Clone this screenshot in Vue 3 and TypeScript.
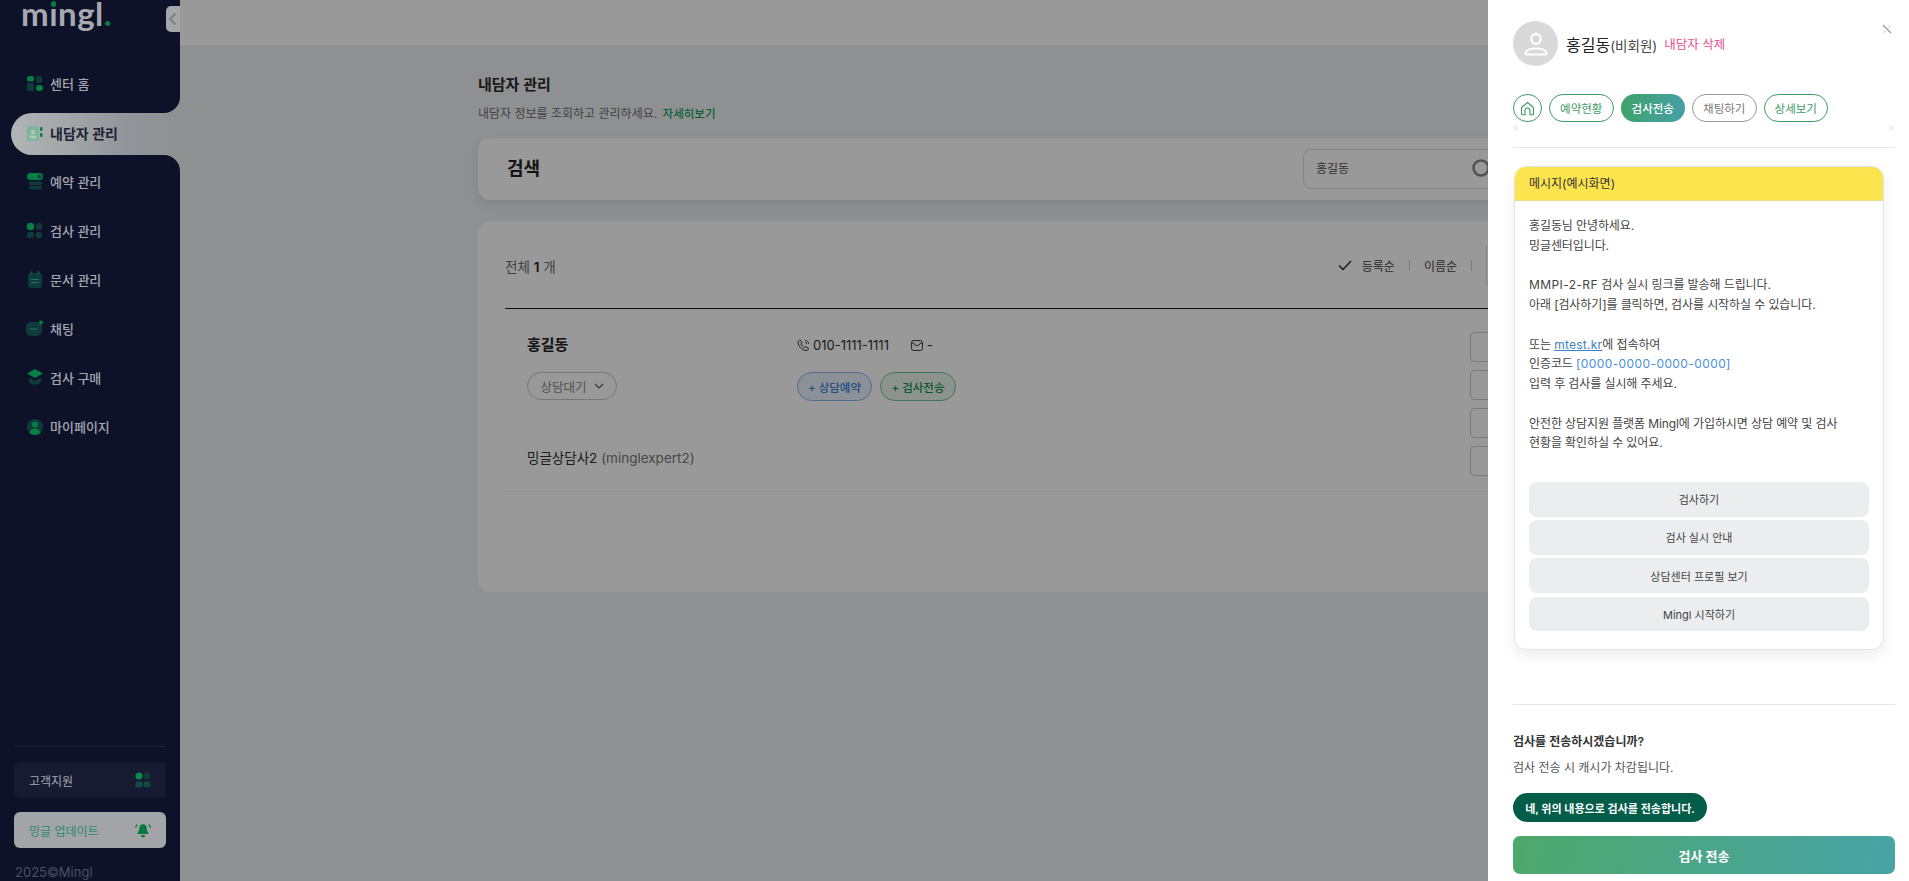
<template>
  <div class="page">
    <!-- Sidebar -->
    <aside class="sidebar">
      <div class="nav-top">
        <div class="logo">m<span class="logo__i">ı<i class="logo__dot" /></span>ngl<span class="logo__end">.</span></div>
        <button class="collapse" aria-label="collapse">
          <svg width="9" height="14" viewBox="0 0 9 14"><path d="M7.5 1.5 2 7l5.5 5.5" fill="none" stroke="#7d7f80" stroke-width="2" /></svg>
        </button>
        <a v-for="item in navBefore" :key="item.label" class="nav-item">
          <NavIcon :name="item.icon" />
          <span class="nav-text">{{ item.label }}</span>
        </a>
      </div>
      <div class="nav-active-row">
        <a class="nav-active">
          <NavIcon name="client" />
          <span class="nav-active__text">내담자 관리</span>
        </a>
      </div>
      <div class="nav-bottom">
        <a v-for="item in navAfter" :key="item.label" class="nav-item">
          <NavIcon :name="item.icon" />
          <span class="nav-text">{{ item.label }}</span>
        </a>
        <div class="side-foot">
          <div class="support">
            고객지원
            <svg width="16" height="16" viewBox="0 0 16 16">
              <circle cx="4" cy="4" r="3.5" fill="#0a8a48" />
              <circle cx="12" cy="4" r="3.5" fill="#123a38" />
              <rect x="0.5" y="9.5" width="7" height="6" rx="2" fill="#124a3f" />
              <rect x="8.5" y="9.5" width="7" height="6" rx="2" fill="#124a3f" />
            </svg>
          </div>
          <div class="update">
            밍글 업데이트
            <svg width="16" height="16" viewBox="0 0 16 16">
              <path d="M8 2.2c-2.6 0-3.8 2-3.8 4.400 0 2.200-.9 3.500-1.700 4.400v1h11v-1c-.8-.9-1.700-2.200-1.700-4.400 0-2.400-1.200-4.400-3.800-4.400Z" fill="#067a3e" />
              <rect x="6" y="13" width="4" height="2.200" rx="1" fill="#067a3e" />
              <path d="M2.300 2.500C1.200 3.600.7 4.700.6 6M13.700 2.500c1.100 1.100 1.600 2.200 1.700 3.500" fill="none" stroke="#067a3e" stroke-width="1.100" />
            </svg>
          </div>
          <div class="copyright">2025©Mingl</div>
        </div>
      </div>
    </aside>

    <!-- Main -->
    <main class="main">
      <div class="topbar" />
      <div class="content">
        <h1 class="title">내담자 관리</h1>
        <p class="subtitle">내담자 정보를 조회하고 관리하세요. <a class="more">자세히보기</a></p>

        <section class="search-card">
          <h2>검색</h2>
          <div class="search-input">
            <span>홍길동</span>
            <svg width="22" height="22" viewBox="0 0 22 22"><circle cx="10" cy="10" r="7.500" fill="none" stroke="#888" stroke-width="2.500" /></svg>
          </div>
        </section>

        <section class="list-card">
          <div class="list-head">
            <div class="total">전체 <b>1</b> 개</div>
            <div class="sort">
              <svg width="14" height="11" viewBox="0 0 14 11"><path d="m1 5.500 4 4L13 1" fill="none" stroke="#222" stroke-width="1.300" /></svg>
              <span>등록순</span>
              <i class="sort__sep" />
              <span>이름순</span>
              <i class="sort__sep" />
              <i class="sort__bar" />
            </div>
          </div>

          <div class="client-row">
            <div class="client-main">
              <div class="client-grid">
                <div class="client-name">홍길동</div>
                <div class="contact">
                  <svg width="13" height="13" viewBox="0 0 13 13"><path d="M3.300 1 5 3.700 4 5c.6 1.500 2 3 3.600 3.700l1.200-1.100 2.700 1.700c-.3 1.400-1.200 2.300-2.300 2.200C4.800 11.200 1.400 7.600 1 3.400.9 2.300 2 1.300 3.300 1Z" fill="none" stroke="#333" stroke-width="1" /><path d="M8 1.200c2 .2 3.500 1.700 3.700 3.700M8 3.200c1 .1 1.600.8 1.700 1.700" fill="none" stroke="#333" stroke-width=".9" /></svg>
                  <span class="contact__text">010-1111-1111</span>
                  <svg class="contact__mail" width="12" height="11" viewBox="0 0 12 11"><rect x=".6" y=".6" width="10.800" height="9.800" rx="1.800" fill="none" stroke="#333" /><path d="m1 2.500 5 3.500 5-3.500" fill="none" stroke="#333" /></svg>
                  <span>-</span>
                </div>
                <button class="status">
                  상담대기
                  <svg width="10" height="7" viewBox="0 0 10 7"><path d="m1 1 4 4 4-4" fill="none" stroke="#555" stroke-width="1.100" /></svg>
                </button>
                <div class="chips">
                  <span class="chip chip--blue">+ 상담예약</span>
                  <span class="chip chip--green">+ 검사전송</span>
                </div>
              </div>
              <div class="expert">밍글상담사2 <span>(minglexpert2)</span></div>
            </div>
            <div class="row-boxes">
              <span v-for="n in 4" :key="n" class="row-box" />
            </div>
          </div>
        </section>
      </div>
    </main>
    <div class="scrim" />

    <!-- Drawer -->
    <aside class="drawer">
      <button class="close" aria-label="close">
        <svg width="10" height="10" viewBox="0 0 10 10"><path d="m1 1 8 8" fill="none" stroke="#999" stroke-width="1.200" /><path d="M9 1 1 9" fill="none" stroke="#ccc" stroke-width="1" /></svg>
      </button>
      <header class="drawer-head">
        <div class="avatar">
          <svg width="28" height="28" viewBox="0 0 28 28">
            <circle cx="14" cy="9" r="4.800" fill="none" stroke="#fff" stroke-width="2.200" />
            <path d="M5 24.500h18c1.500 0 2-1 1.500-2-1-2.500-5-4-10.500-4s-9.500 1.500-10.500 4c-.5 1 0 2 1.500 2Z" fill="none" stroke="#fff" stroke-width="2.200" />
          </svg>
        </div>
        <div class="drawer-name">홍길동<small>(비회원)</small></div>
        <a class="delete">내담자 삭제</a>
      </header>

      <nav class="tabs">
        <span class="tab tab--home">
          <svg width="15" height="15" viewBox="0 0 15 15"><path d="M1.500 6.500 7.500 1.500l6 5v6a1.300 1.300 0 0 1-1.300 1.300h-2.200V9.500a2.500 2.500 0 0 0-5 0v4.300H2.800a1.300 1.300 0 0 1-1.300-1.300Z" fill="none" stroke="#3f9b66" stroke-width="1.100" /></svg>
        </span>
        <span
          v-for="tab in tabs"
          :key="tab.label"
          class="tab"
          :class="{ 'tab--active': tab.active, 'tab--muted': tab.muted }"
        >{{ tab.label }}</span>
      </nav>
      <div class="tab-arrows">
        <i class="arrow arrow--left" />
        <i class="arrow arrow--right" />
      </div>

      <section class="message">
        <div class="message__head">메시지(예시화면)</div>
        <div class="message__body">
          <p>홍길동님 안녕하세요.<br>밍글센터입니다.</p>
          <p><span class="latin">MMPI-2-RF</span> 검사 실시 링크를 발송해 드립니다.<br>아래 [검사하기]를 클릭하면, 검사를 시작하실 수 있습니다.</p>
          <p>또는 <a class="link">mtest.kr</a>에 접속하여<br>인증코드 <span class="code">[0000-0000-0000-0000]</span><br>입력 후 검사를 실시해 주세요.</p>
          <p>안전한 상담지원 플랫폼 Mingl에 가입하시면 상담 예약 및 검사<br>현황을 확인하실 수 있어요.</p>
          <div class="message__actions">
            <button v-for="label in messageActions" :key="label" class="action">{{ label }}</button>
          </div>
        </div>
      </section>

      <div class="drawer-foot">
        <div class="ask">검사를 전송하시겠습니까?</div>
        <div class="note">검사 전송 시 캐시가 차감됩니다.</div>
        <button class="confirm">네, 위의 내용으로 검사를 전송합니다.</button>
        <button class="submit">검사 전송</button>
      </div>
    </aside>
  </div>
</template>

<script setup lang="ts">
import { defineComponent, h } from 'vue'

const navBefore = [{ label: '센터 홈', icon: 'home' }]
const navAfter = [
  { label: '예약 관리', icon: 'book' },
  { label: '검사 관리', icon: 'test' },
  { label: '문서 관리', icon: 'doc' },
  { label: '채팅', icon: 'chat' },
  { label: '검사 구매', icon: 'buy' },
  { label: '마이페이지', icon: 'my' },
]

const tabs = [
  { label: '예약현황' },
  { label: '검사전송', active: true },
  { label: '채팅하기', muted: true },
  { label: '상세보기' },
]

const messageActions = ['검사하기', '검사 실시 안내', '상담센터 프로필 보기', 'Mingl 시작하기']

const on = '#067f42'
const dim = '#0f3b3b'

type Shape = [string, Record<string, string | number>]

const r = (x: number, y: number, width: number, height: number, rx: number, fill: string): Shape =>
  ['rect', { x, y, width, height, rx, fill }]
const c = (cx: number, cy: number, rad: number, fill: string): Shape =>
  ['circle', { cx, cy, r: rad, fill }]

const icons: Record<string, Shape[]> = {
  home: [r(1, 1, 7, 5.500, 2, on), r(10, 1, 6, 7, 2, dim), r(1, 8, 7, 8, 2, dim), r(10, 10, 7, 6, 3, on)],
  client: [
    r(1, 1, 12, 15, 2.500, '#7fb59b'),
    c(7, 7, 2.200, '#a9cdb9'),
    r(3.500, 10.500, 7, 3, 1.500, '#a9cdb9'),
    r(14, 2, 2.500, 4, 1, on),
    r(14, 8, 2.500, 4, 1, on),
  ],
  book: [r(1, 0, 16, 7, 3.500, on), c(13.500, 3.500, 1.800, dim), r(3, 8.500, 13, 3.500, 1.500, dim), r(3, 13, 13, 3.500, 1.500, dim)],
  test: [c(4.500, 4.500, 3.800, on), r(10, 1, 6, 7, 2.500, dim), r(1, 10, 7, 6, 1.500, dim), r(10, 10, 6, 6, 1.500, dim)],
  doc: [r(2, 2, 14, 15, 3, dim), r(4.500, 0, 2, 4, 1, '#14524a'), r(11.500, 0, 2, 4, 1, '#14524a'), r(5, 8, 8, 1, .5, '#1f7a5f'), r(5, 11, 8, 1, .5, '#1f7a5f')],
  chat: [r(0, 2, 16, 14, 5, dim), r(3.500, 8.500, 8, 1, .5, '#1f7a5f'), c(15, 2.500, 2, on)],
  buy: [
    ['path', { d: 'M9 0 17 4.500 9 9 1 4.500Z', fill: on }],
    ['path', { d: 'M3 8.500 9 11.800 15 8.500v4.500c-1.300 1.800-3.300 2.700-6 2.700s-4.700-.9-6-2.700Z', fill: dim }],
  ],
  my: [c(9, 9, 8, dim), c(9, 6.500, 3, on), ['path', { d: 'M3.500 15c.5-3 2.600-4.500 5.500-4.500s5 1.500 5.500 4.500c-1.500 1.300-3.400 2-5.500 2s-4-.7-5.500-2Z', fill: on }]],
}

const NavIcon = defineComponent({
  props: { name: { type: String, required: true } },
  setup(props) {
    return () =>
      h(
        'svg',
        { width: 18, height: 18, viewBox: '0 0 18 18', class: 'nav-icon' },
        icons[props.name].map(([tag, attrs]) => h(tag, attrs)),
      )
  },
})
</script>

<style>
html, body {
  margin: 0;
  background: #eef0f2;
}
</style>

<style scoped>
.page {
  position: relative;
  display: flex;
  height: 881px;
  overflow: hidden;
  font-family: Inter, "Noto Sans CJK KR", sans-serif;
  color: #2b2b2b;
  background: #eef0f2;
}

button {
  font-family: inherit;
  border: 0;
  cursor: pointer;
}

p, h1, h2 {
  margin: 0;
}

/* Sidebar */
.sidebar {
  position: relative;
  z-index: 2;
  width: 180px;
  flex-shrink: 0;
  display: flex;
  flex-direction: column;
  background: #8f9091;
  font-size: 13px;
  font-weight: 500;
  color: #a4a6b0;
}

.nav-top {
  position: relative;
  height: 113px;
  box-sizing: border-box;
  background: #0d1229;
  border-bottom-right-radius: 16px;
  padding-bottom: 4.500px;
  display: flex;
  flex-direction: column;
  justify-content: flex-end;
}

.logo {
  position: absolute;
  left: 21px;
  top: 0;
  font-family: Lato, sans-serif;
  font-size: 33px;
  font-weight: 700;
  line-height: 26px;
  letter-spacing: .5px;
  color: #a8a9b0;
}

.logo__i {
  position: relative;
}

.logo__dot {
  position: absolute;
  left: 1.500px;
  top: 8px;
  width: 5.500px;
  height: 5.500px;
  border-radius: 50%;
  background: #067f42;
}

.logo__end {
  color: #067f42;
}

.collapse {
  position: absolute;
  right: 0;
  top: 6px;
  width: 14px;
  height: 26px;
  padding: 0 0 0 2px;
  border-radius: 5px 0 0 5px;
  background: #a5a6a6;
  display: flex;
  align-items: center;
}

.nav-item {
  height: 49px;
  padding-left: 26px;
  display: flex;
  align-items: center;
  gap: 6px;
}

.nav-text {
  margin-top: -2px;
}

.nav-icon {
  flex-shrink: 0;
}

.nav-active-row {
  height: 42px;
  background: #0d1229;
  padding-left: 11px;
}

.nav-active {
  height: 100%;
  display: flex;
  align-items: center;
  gap: 6px;
  padding-left: 15px;
  border-radius: 21px 0 0 21px;
  background: linear-gradient(90deg, #b2b5b5, #93949a 70%, #8f9091);
  color: #1c2232;
  font-size: 14px;
  font-weight: 600;
}

.nav-active__text {
  margin-top: -3px;
}

.nav-bottom {
  flex: 1;
  background: #0d1229;
  border-top-right-radius: 16px;
  padding-top: 2.500px;
  display: flex;
  flex-direction: column;
}

.side-foot {
  margin: auto 14px 0 14px;
  border-top: 1px solid #1a1f38;
  padding-top: 15px;
  font-size: 12px;
  font-weight: 400;
}

.support,
.update {
  height: 36px;
  box-sizing: border-box;
  padding: 0 15px;
  border-radius: 6px;
  display: flex;
  align-items: center;
  justify-content: space-between;
}

.support {
  background: #161b32;
}

.update {
  margin-top: 14px;
  background: #a2a4a8;
  color: #2b8a6c;
}

.copyright {
  margin-top: 14px;
  height: 19px;
  line-height: 20px;
  font-size: 13px;
  color: #4a4f66;
  padding-left: 1px;
}

/* Main */
.main {
  flex: 1;
  min-width: 0;
  display: flex;
  flex-direction: column;
}

.scrim {
  position: absolute;
  inset: 0;
  z-index: 1;
  background: rgba(0, 0, 0, 0.4);
}

.topbar {
  height: 46px;
  flex-shrink: 0;
  background: #fff;
  border-bottom: 1px solid #e2e4e6;
}

.content {
  width: 1133px;
  margin: 0 auto;
  padding-top: 26px;
}

.title {
  font-size: 15px;
  font-weight: 600;
  line-height: 24px;
  color: #2a2a2a;
}

.subtitle {
  margin-top: 7px;
  font-size: 12px;
  line-height: 20px;
  color: #6e6e6e;
}

.more {
  margin-left: 2px;
  font-size: 11.500px;
  color: #14a05f;
  font-weight: 500;
}

.search-card {
  margin-top: 14px;
  height: 62px;
  padding: 0 29px;
  display: flex;
  align-items: center;
  justify-content: space-between;
  background: #fff;
  border-radius: 12px;
  box-shadow: 0 5px 12px rgba(0, 0, 0, 0.09);
}

.search-card h2 {
  margin-top: -4px;
  font-size: 18px;
  font-weight: 600;
  color: #222;
}

.search-input {
  width: 284px;
  height: 40px;
  box-sizing: border-box;
  margin-right: -5px;
  padding: 0 12px;
  display: flex;
  align-items: center;
  justify-content: space-between;
  border: 1px solid #dcdcdc;
  border-radius: 8px;
  font-size: 12px;
  color: #555;
}

.search-input span {
  margin-top: -4px;
}

.search-input svg {
  margin-right: 81px;
}

.list-card {
  margin-top: 21px;
  height: 371px;
  box-sizing: border-box;
  padding: 0 27px;
  background: #fff;
  border-radius: 12px;
}

.list-head {
  height: 88px;
  padding-top: 2px;
  box-sizing: border-box;
  display: flex;
  align-items: center;
  justify-content: space-between;
  border-bottom: 1px solid #111;
}

.total {
  font-size: 13.500px;
  color: #6b6b6b;
}

.total b {
  color: #222;
  font-weight: 600;
}

.sort {
  display: flex;
  align-items: center;
  font-size: 12px;
  color: #444;
  margin-right: 97px;
}

.sort svg {
  margin-right: 10px;
}

.sort__sep {
  width: 1px;
  height: 11px;
  margin: 0 14px;
  background: #ccc;
}

.sort__bar {
  width: 1px;
  height: 40px;
  background: #ddd;
}

.client-row {
  display: flex;
  padding: 23px 0 0 22px;
  height: 183px;
  box-sizing: border-box;
  border-bottom: 1px solid #f0f0f0;
}

.client-main {
  flex: 1;
  padding-top: 1px;
}

.client-grid {
  display: grid;
  grid-template-columns: 270px 1fr;
  row-gap: 15px;
}

.client-name {
  font-size: 15px;
  font-weight: 600;
  line-height: 24px;
  color: #222;
}

.contact {
  display: flex;
  align-items: center;
  font-size: 13px;
  color: #333;
}

.contact__text {
  margin-left: 3px;
}

.contact__mail {
  margin: 0 4px 0 22px;
}

.status {
  width: 90px;
  height: 28px;
  padding: 0;
  background: transparent;
  border: 1px solid #c8c8c8;
  border-radius: 14px;
  font-size: 12.500px;
  color: #888;
  display: flex;
  align-items: center;
  justify-content: center;
  gap: 7px;
}

.chips {
  display: flex;
  gap: 8px;
}

.chip {
  width: 75px;
  height: 29px;
  box-sizing: border-box;
  border-radius: 15px;
  font-size: 11.500px;
  font-weight: 500;
  display: flex;
  align-items: center;
  justify-content: center;
}

.chip--blue {
  border: 1px solid #8ab4ea;
  background: #eaf2fc;
  color: #3b82d6;
}

.chip--green {
  width: 76px;
  border: 1px solid #6fc295;
  background: #e9f6ef;
  color: #15914f;
}

.expert {
  margin-top: 47px;
  font-size: 13.500px;
  line-height: 20px;
  color: #2e2e2e;
}

.expert span {
  color: #777;
}

.row-boxes {
  width: 114px;
  display: flex;
  flex-direction: column;
  gap: 8px;
}

.row-box {
  width: 60px;
  height: 28px;
  border: 1px solid #ccc;
  border-radius: 4px;
}

/* Drawer */
.drawer {
  position: absolute;
  z-index: 3;
  right: 0;
  top: 0;
  bottom: 0;
  width: 421px;
  box-sizing: border-box;
  padding: 21px 14px 0 25px;
  background: #fff;
  color: #333;
}

.close {
  position: absolute;
  right: 17px;
  top: 21px;
  padding: 0;
  background: none;
}

.drawer-head {
  display: flex;
  align-items: center;
  height: 45px;
}

.avatar {
  width: 45px;
  height: 45px;
  border-radius: 50%;
  background: #d9d9d9;
  display: flex;
  align-items: center;
  justify-content: center;
}

.drawer-name {
  margin-left: 8px;
  font-size: 16px;
  color: #222;
}

.drawer-name small {
  font-size: 13.500px;
  color: #444;
}

.delete {
  margin-left: 7px;
  font-size: 12.500px;
  color: #ea4f8c;
}

.tabs {
  margin-top: 28px;
  display: flex;
  gap: 7px;
}

.tab {
  width: 64.500px;
  height: 28px;
  box-sizing: border-box;
  border: 1px solid #3f9b66;
  border-radius: 14px;
  display: flex;
  align-items: center;
  justify-content: center;
  font-size: 11.500px;
  color: #3f9b66;
}

.tab--home {
  width: 29px;
}

.tab--active {
  border: 0;
  font-weight: 500;
  color: #fff;
  background: linear-gradient(100deg, #3fa368, #46a0a8);
}

.tab--muted {
  border-color: #999;
  color: #777;
}

.tab-arrows {
  height: 26px;
  display: flex;
  justify-content: space-between;
  align-items: flex-start;
  padding-top: 3px;
  box-sizing: border-box;
  border-bottom: 1px solid #e4e4e4;
}

.arrow {
  border-top: 3px solid transparent;
  border-bottom: 3px solid transparent;
}

.arrow--left {
  border-right: 4px solid #eee;
}

.arrow--right {
  margin-right: 1px;
  border-left: 4px solid #eee;
}

.message {
  width: 370px;
  height: 484px;
  box-sizing: border-box;
  margin: 18px 0 0 1px;
  background: #fff;
  border: 1px solid #e4e4e4;
  border-radius: 12px;
  box-shadow: 0 6px 14px rgba(0, 0, 0, 0.07);
  overflow: hidden;
}

.message__head {
  height: 34px;
  padding-left: 14px;
  background: #fbe44d;
  border-bottom: 1px solid #e8dc88;
  box-sizing: border-box;
  font-size: 12px;
  line-height: 33px;
  color: #333;
}

.message__body {
  padding: 15px 14px 0;
  font-size: 12px;
  line-height: 19.750px;
  letter-spacing: -.1px;
  color: #444;
}

.message__body p + p {
  margin-top: 19.750px;
}

.latin {
  letter-spacing: .4px;
}

.link {
  color: #3b82c4;
  text-decoration: underline;
  letter-spacing: .25px;
}

.code {
  color: #4a90dc;
  letter-spacing: .4px;
}

.message__actions {
  margin-top: 29px;
  display: flex;
  flex-direction: column;
  gap: 3.700px;
}

.action {
  height: 34.500px;
  background: #ebedef;
  border-radius: 8px;
  font-size: 11px;
  color: #444;
}

.drawer-foot {
  margin-top: 54px;
  padding-top: 27px;
  border-top: 1px solid #e4e4e4;
  font-size: 12px;
  line-height: 20px;
}

.ask {
  font-weight: 600;
  color: #333;
}

.note {
  margin-top: 6px;
  color: #555;
}

.confirm {
  display: block;
  width: 194px;
  height: 29px;
  margin-top: 15px;
  padding: 0;
  border-radius: 15px;
  background: #035d49;
  color: #fff;
  font-size: 11px;
  font-weight: 600;
}

.submit {
  display: block;
  width: 382px;
  height: 38px;
  margin-top: 14px;
  border-radius: 7px;
  background: linear-gradient(100deg, #4ea86c, #48a3a6);
  color: #fff;
  font-size: 13px;
  font-weight: 700;
}
</style>
